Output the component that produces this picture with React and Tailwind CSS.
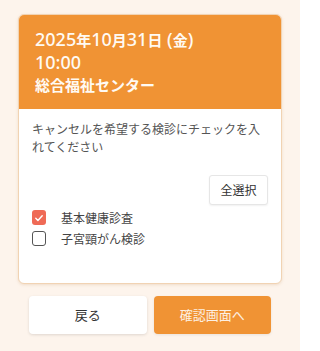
import React from "react";

export default function App() {
  const font = { fontFamily: '"Noto Sans CJK JP", "Noto Sans", sans-serif' };
  const num = "text-[18px] font-medium [font-family:'Noto_Sans',sans-serif]";
  return (
    <div className="w-[300px] h-[351px] bg-[#fdf4ec] pt-[14px] px-[18px]" style={font}>
      <div className="rounded-[6px] border border-[#f1d3b3] bg-white shadow-[0_1px_3px_rgba(200,150,100,0.25)] overflow-hidden">
        <div className="bg-[#f09334] text-[#fffaf3] px-4 pt-[13px] pb-[13px] text-[15px] leading-[22px] font-bold">
          <div>
            <span className={num}>2025</span>年<span className={num}>10</span>月<span className={num}>31</span>日<span className={num}> (</span>金<span className={num}>)</span>
          </div>
          <div>
            <span className={num}>10:00</span>
          </div>
          <div>総合福祉センター</div>
        </div>
        <div className="px-[13px] pt-[11px] pb-[37px]">
          <p className="text-[12px] leading-[18px] text-[#555]">
            キャンセルを希望する検診にチェックを入れてください
          </p>
          <div className="flex justify-end mt-[19px]">
            <button className="h-[30px] w-[59px] rounded-[3px] border border-[#e6e6e6] bg-white text-[12px] text-[#333] shadow-[0_1px_2px_rgba(0,0,0,0.06)]">
              全選択
            </button>
          </div>
          <div className="mt-[5px] flex flex-col gap-[6px]">
            <label className="flex items-center gap-[15px] h-[15px]">
              <span className="w-[14px] h-[15px] rounded-[3px] bg-[#ef6a56] flex items-center justify-center">
                <svg viewBox="0 0 14 14" className="w-[10px] h-[10px]" fill="none" stroke="white" strokeWidth="2" strokeLinecap="round" strokeLinejoin="round">
                  <path d="M2.5 7.5 L5.5 10.5 L11.5 4" />
                </svg>
              </span>
              <span className="text-[12px] text-[#444]">基本健康診査</span>
            </label>
            <label className="flex items-center gap-[15px] h-[15px]">
              <span className="w-[14px] h-[15px] rounded-[3px] border-[1.5px] border-[#555] bg-white" />
              <span className="text-[12px] text-[#444]">子宮頸がん検診</span>
            </label>
          </div>
        </div>
      </div>
      <div className="flex gap-[7px] mt-[12px] px-[11px]">
        <button className="h-[38px] w-[118px] rounded-[4px] bg-white text-[13px] text-[#333] shadow-[0_1px_3px_rgba(0,0,0,0.12)]">
          戻る
        </button>
        <button className="h-[38px] w-[118px] rounded-[4px] bg-[#f09334] text-[13px] text-[#fdf0e2] shadow-[0_1px_3px_rgba(0,0,0,0.08)]">
          確認画面へ
        </button>
      </div>
    </div>
  );
}
